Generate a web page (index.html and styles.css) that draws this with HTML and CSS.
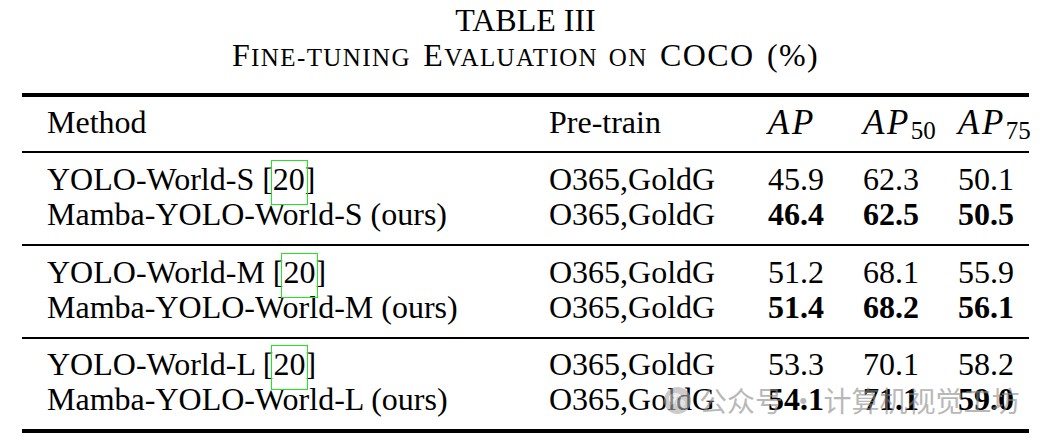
FILE: index.html
```html
<!DOCTYPE html>
<html lang="en">
<head>
<meta charset="utf-8">
<title>TABLE III</title>
<link rel="stylesheet" href="styles.css">
</head>
<body>
<div class="page">
  <div class="caption">
    <div class="cap-line">TABLE III</div>
    <div class="cap-line cap-sub">F<span class="sc">ine-tuning</span> E<span class="sc">valuation on</span> COCO (%)</div>
  </div>
  <div class="table">
    <div class="row head">
      <div class="cell">Method</div>
      <div class="cell">Pre-train</div>
      <div class="cell"><span class="math">AP</span></div>
      <div class="cell"><span class="math">AP</span><sub class="sub">50</sub></div>
      <div class="cell"><span class="math">AP</span><sub class="sub">75</sub></div>
    </div>
    <div class="group">
      <div class="row">
        <div class="cell">YOLO-World-S [<span class="cite">20</span>]</div>
        <div class="cell">O365,GoldG</div>
        <div class="cell">45.9</div>
        <div class="cell">62.3</div>
        <div class="cell">50.1</div>
      </div>
      <div class="row">
        <div class="cell">Mamba-YOLO-World-S (ours)</div>
        <div class="cell">O365,GoldG</div>
        <div class="cell bold">46.4</div>
        <div class="cell bold">62.5</div>
        <div class="cell bold">50.5</div>
      </div>
    </div>
    <div class="group">
      <div class="row">
        <div class="cell">YOLO-World-M [<span class="cite">20</span>]</div>
        <div class="cell">O365,GoldG</div>
        <div class="cell">51.2</div>
        <div class="cell">68.1</div>
        <div class="cell">55.9</div>
      </div>
      <div class="row">
        <div class="cell">Mamba-YOLO-World-M (ours)</div>
        <div class="cell">O365,GoldG</div>
        <div class="cell bold">51.4</div>
        <div class="cell bold">68.2</div>
        <div class="cell bold">56.1</div>
      </div>
    </div>
    <div class="group last">
      <div class="row">
        <div class="cell">YOLO-World-L [<span class="cite">20</span>]</div>
        <div class="cell">O365,GoldG</div>
        <div class="cell">53.3</div>
        <div class="cell">70.1</div>
        <div class="cell">58.2</div>
      </div>
      <div class="row">
        <div class="cell">Mamba-YOLO-World-L (ours)</div>
        <div class="cell">O365,GoldG</div>
        <div class="cell bold">54.1</div>
        <div class="cell bold">71.1</div>
        <div class="cell bold">59.0</div>
      </div>
    </div>
  </div>
  <div class="watermark">
    <svg class="wm-icon" width="27" height="27" viewBox="0 0 26 26" aria-hidden="true">
      <circle cx="13" cy="13" r="13" fill="#a9a9a9"/>
      <ellipse cx="11" cy="11" rx="6.5" ry="5.2" fill="#e4e4e4"/>
      <path d="M7 14.5 L6 18 L9.5 15.6 Z" fill="#e4e4e4"/>
      <ellipse cx="15.8" cy="15.4" rx="5.2" ry="4.2" fill="#cfcfcf" stroke="#a9a9a9" stroke-width="1"/>
      <path d="M19 18 L20.2 20.6 L17.4 19 Z" fill="#cfcfcf"/>
      <circle cx="9" cy="10.4" r="0.9" fill="#a9a9a9"/>
      <circle cx="13" cy="10.4" r="0.9" fill="#a9a9a9"/>
    </svg>
    <span class="wm-text">公众号 · 计算机视觉工坊</span>
  </div>
</div>
</body>
</html>
```

FILE: styles.css
```css
html, body {
  margin: 0;
  padding: 0;
  background: #ffffff;
}

body {
  font-family: "Liberation Serif", "Times New Roman", serif;
  color: #000000;
  font-size: 32px;
  line-height: 35px;
}

.page {
  position: relative;
  width: 1059px;
  height: 445px;
  overflow: hidden;
}

.caption {
  width: 1007px;
  margin-left: 22px;
  padding-top: 3px;
  text-align: center;
}

.cap-line {
  height: 35px;
  white-space: nowrap;
}

.cap-sub {
  letter-spacing: 1.4px;
  word-spacing: 3px;
}

.sc {
  text-transform: uppercase;
  font-size: 25px;
}

.table {
  width: 1007px;
  margin-left: 22px;
  margin-top: 20px;
  border-top: 4px solid #000;
  border-bottom: 4px solid #000;
}

.row {
  display: grid;
  grid-template-columns: 502px 219px 95px 95px 71px;
  padding-left: 25px;
  height: 35px;
  white-space: nowrap;
}

.head {
  padding-top: 8px;
  padding-bottom: 11px;
}

.group {
  border-top: 2px solid #000;
  padding-top: 9px;
  padding-bottom: 12px;
}

.group.last {
  padding-top: 8px;
  padding-bottom: 12px;
}

.math {
  font-style: italic;
  font-size: 35px;
  letter-spacing: 2.5px;
}

.sub {
  font-size: 25px;
  vertical-align: -5px;
  line-height: 0;
}

.bold {
  font-weight: bold;
}

.cite {
  position: relative;
}

.cite::after {
  content: "";
  position: absolute;
  left: -2px;
  right: -3px;
  top: -1px;
  bottom: -8px;
  border: 1px solid #22e622;
}

.watermark {
  position: absolute;
  left: 664px;
  top: 386px;
  display: flex;
  align-items: center;
  gap: 8px;
  opacity: 0.6;
  pointer-events: none;
}

.wm-icon {
  display: block;
}

.wm-text {
  font-family: "Noto Sans CJK SC", "Noto Sans", sans-serif;
  font-size: 28px;
  line-height: 28px;
  color: #8a8a8a;
  white-space: nowrap;
}
```
